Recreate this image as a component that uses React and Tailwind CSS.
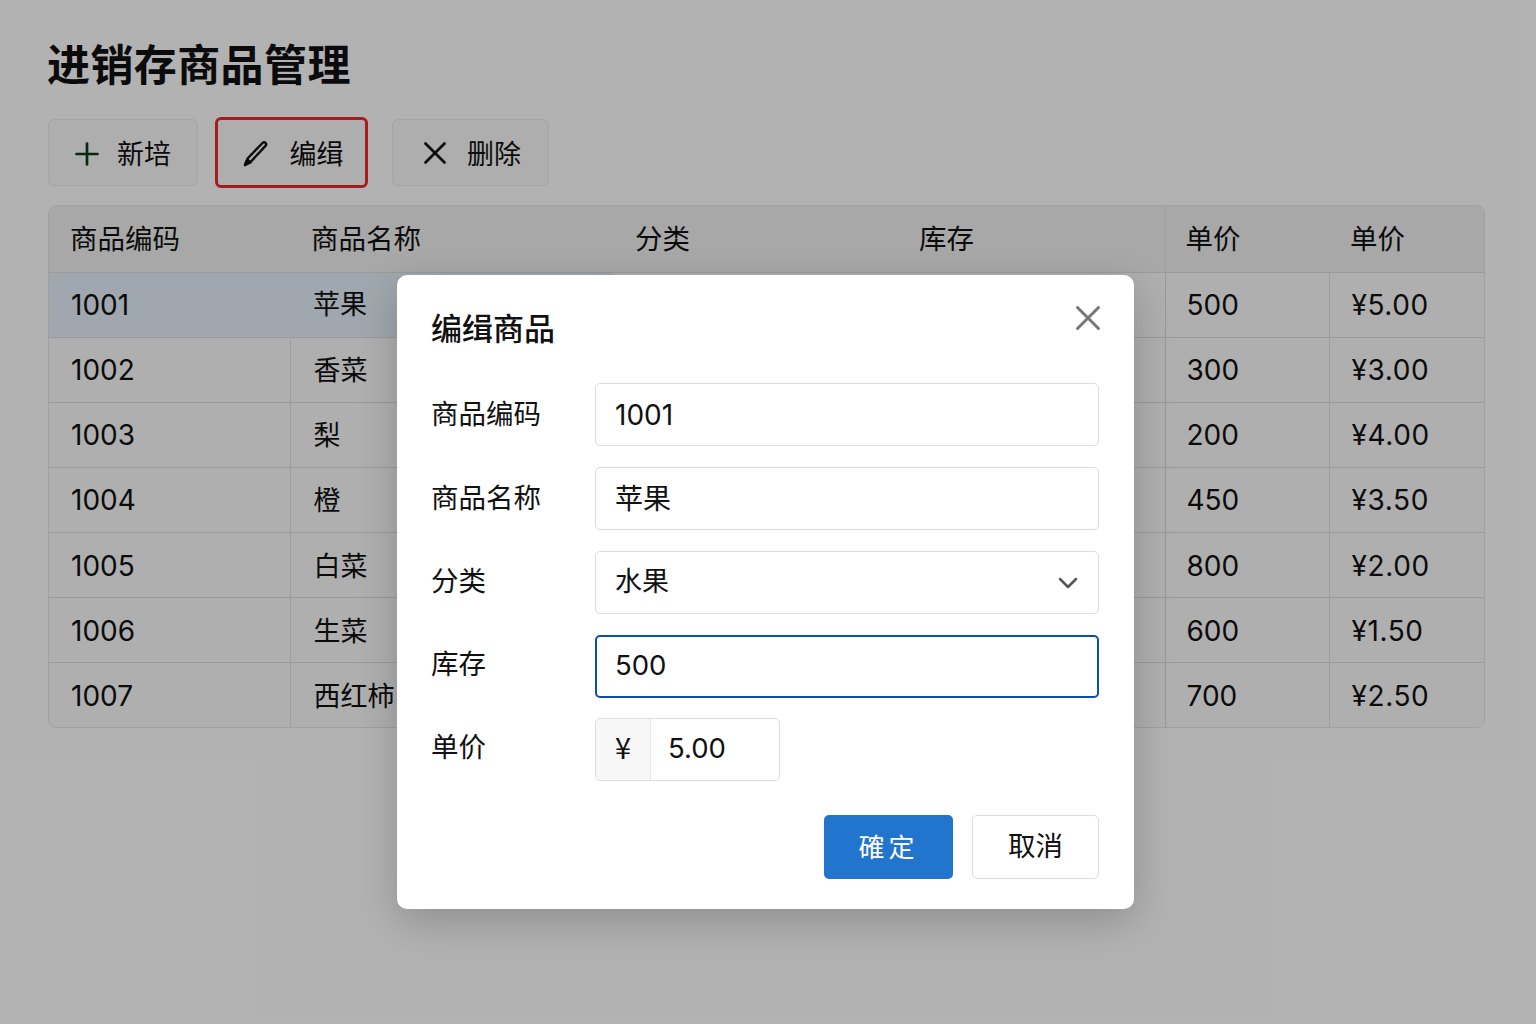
import { Plus, X, ChevronDown } from "lucide-react";

const ROWS = [
  { code: "1001", name: "苹果", stock: "500", price: "¥5.00", selected: true, nudge: "" },
  { code: "1002", name: "香菜", stock: "300", price: "¥3.00", nudge: "pt-[1px]" },
  { code: "1003", name: "梨", stock: "200", price: "¥4.00", nudge: "pt-[1px]" },
  { code: "1004", name: "橙", stock: "450", price: "¥3.50", nudge: "pt-[1px]" },
  { code: "1005", name: "白菜", stock: "800", price: "¥2.00", nudge: "pt-[3px]" },
  { code: "1006", name: "生菜", stock: "600", price: "¥1.50", nudge: "pt-[3px]" },
  { code: "1007", name: "西红柿", stock: "700", price: "¥2.50", nudge: "pt-[3px]" },
];

const HEADERS = ["商品编码", "商品名称", "分类", "库存", "单价", "单价"];

function PencilIcon() {
  return (
    <svg width="28" height="28" viewBox="0 0 28 28" fill="none" stroke="currentColor" strokeWidth="2.4" strokeLinejoin="round" strokeLinecap="round">
      <path d="M6 19 20.5 4c1-1 2.1-1 3-.1.9.9.9 2 0 3L9 22.5 3 26z" />
      <path d="M3 26 5.2 20.4 8.6 23.4z" fill="currentColor" />
    </svg>
  );
}

function ToolButton({ icon, label, className }) {
  return (
    <button type="button" className={`flex items-center justify-center rounded-md bg-[#f9f9f9] text-[27px] leading-none text-[#111] ${className}`}>
      {icon}
      <span className="pt-[4px]">{label}</span>
    </button>
  );
}

function Field({ label, className = "", labelClass = "", children }) {
  return (
    <div className={`flex h-[63px] items-center ${className}`}>
      <label className={`w-[164px] text-[27.5px] text-[#111] ${labelClass}`}>{label}</label>
      {children}
    </div>
  );
}

function TextBox({ value, focused }) {
  return (
    <div
      className={`flex h-[63px] w-[504px] items-center rounded-[5px] ${
        focused ? "border-2 border-[#0b4fae] pb-[2px] pl-[18px] text-[27.5px]" : "border border-[#dcdcdc] pl-[19px] text-[28px]"
      }`}
    >
      {value}
    </div>
  );
}

export default function App() {
  return (
    <div className="relative h-[1024px] w-[1536px] overflow-hidden bg-white font-['Inter','Noto_Sans_CJK_SC',sans-serif] text-[#111]">
      <div className="px-[48px] pt-[36px]">
        <h1 className="-ml-px text-[43px] font-bold leading-[58px] tracking-[0.4px] text-[#111]">进销存商品管理</h1>

        {/* Toolbar */}
        <div className="mt-[23px] flex h-[71px] items-center">
          <ToolButton
            className="h-[67px] w-[150px] gap-[12px] border border-[#ececec] pr-[6px]"
            icon={<Plus size={36} strokeWidth={1.8} className="mt-[2px] text-[#0c3d1a]" />}
            label="新培"
          />
          <ToolButton
            className="ml-[17px] h-[71px] w-[153px] gap-[20px] rounded-[10px] border-[3px] border-[#f02a2a] pl-[2px]"
            icon={<PencilIcon />}
            label="编缉"
          />
          <ToolButton
            className="ml-[24px] h-[67px] w-[157px] gap-[13px] border border-[#ececec] pr-[4px]"
            icon={<X size={38} strokeWidth={1.7} className="mt-[1px]" />}
            label="删除"
          />
        </div>

        {/* Product table */}
        <div className="mt-[17px] w-[1437px] overflow-hidden rounded-lg border border-[#e6e6e6]">
          <table className="w-full table-fixed border-collapse text-left text-[28px] leading-none">
            <colgroup>
              <col className="w-[241px]" />
              <col className="w-[324px]" />
              <col className="w-[284px]" />
              <col className="w-[267px]" />
              <col className="w-[164px]" />
              <col />
            </colgroup>
            <thead>
              <tr className="h-[66px] bg-[#f1f1f1] text-[27.5px]">
                {HEADERS.map((title, i) => (
                  <th key={i} className={`pt-[2px] font-normal ${i === 4 ? "border-l border-[#e2e2e2] pl-[20px]" : "pl-[21px]"}`}>
                    {title}
                  </th>
                ))}
              </tr>
            </thead>
            <tbody>
              {ROWS.map((row) => (
                <tr key={row.code} className="h-[65px] border-t border-[#dedede] bg-[#fbfbfb]">
                  <td className={`pl-[22px] ${row.nudge} ${row.selected ? "bg-[#e6eff9]" : ""}`}>{row.code}</td>
                  <td className={`pl-[23px] text-[27px] ${row.nudge} ${row.selected ? "bg-[#e6eff9]" : "border-l border-[#e2e2e2]"}`}>{row.name}</td>
                  <td />
                  <td />
                  <td className={`border-l border-[#dcdcdc] pl-[21px] ${row.nudge}`}>{row.stock}</td>
                  <td className={`border-l border-[#e2e2e2] pl-[22px] tracking-[0.6px] ${row.nudge}`}>{row.price}</td>
                </tr>
              ))}
            </tbody>
          </table>
        </div>
      </div>

      {/* Edit dialog over a dimmed page */}
      <div className="absolute inset-0 bg-black/30 pl-[397px] pt-[275px]">
        <div className="h-[634px] w-[737px] rounded-[10px] bg-white pl-[34px] pr-[35px] pt-[32px] shadow-[0_12px_40px_rgba(0,0,0,0.2)]">
          <div className="flex h-[42px] items-center justify-between">
            <h2 className="text-[31px] font-medium leading-none text-[#111]">编缉商品</h2>
            <X size={42} strokeWidth={1.7} className="-mr-[10px] mb-[20px] text-[#777]" />
          </div>

          <div className="mt-[34px] flex flex-col gap-[21px]">
            <Field label="商品编码">
              <TextBox value="1001" />
            </Field>
            <Field label="商品名称">
              <TextBox value="苹果" />
            </Field>
            <Field label="分类" labelClass="pb-[2px]">
              <div className="flex h-[63px] w-[504px] items-center justify-between rounded-[5px] border border-[#dcdcdc] pl-[19px] pr-[14px] text-[27px]">
                水果
                <ChevronDown size={32} strokeWidth={1.9} className="text-[#555]" />
              </div>
            </Field>
            <Field label="库存" labelClass="pb-[4px]">
              <TextBox value="500" focused />
            </Field>
            <Field label="单价" className="-mt-px" labelClass="pb-[4px]">
              <div className="flex h-[63px] w-[185px] items-center overflow-hidden rounded-[5px] border border-[#dcdcdc] text-[27.5px]">
                <span className="flex h-full w-[55px] items-center justify-center border-r border-[#e8e8e8] bg-[#f7f7f7] pb-[6px] font-['Noto_Sans_CJK_SC',sans-serif] text-[29px]">¥</span>
                <span className="pb-[1px] pl-[17px]">5.00</span>
              </div>
            </Field>
          </div>

          <div className="mt-[34px] flex justify-end gap-[19px]">
            <button type="button" className="h-[64px] w-[129px] rounded-[5px] bg-[#2275cc] text-[26px] tracking-[4px] text-white">確定</button>
            <button type="button" className="h-[64px] w-[127px] rounded-[5px] border border-[#dcdcdc] bg-white text-[27.5px] text-[#111]">取消</button>
          </div>
        </div>
      </div>
    </div>
  );
}
